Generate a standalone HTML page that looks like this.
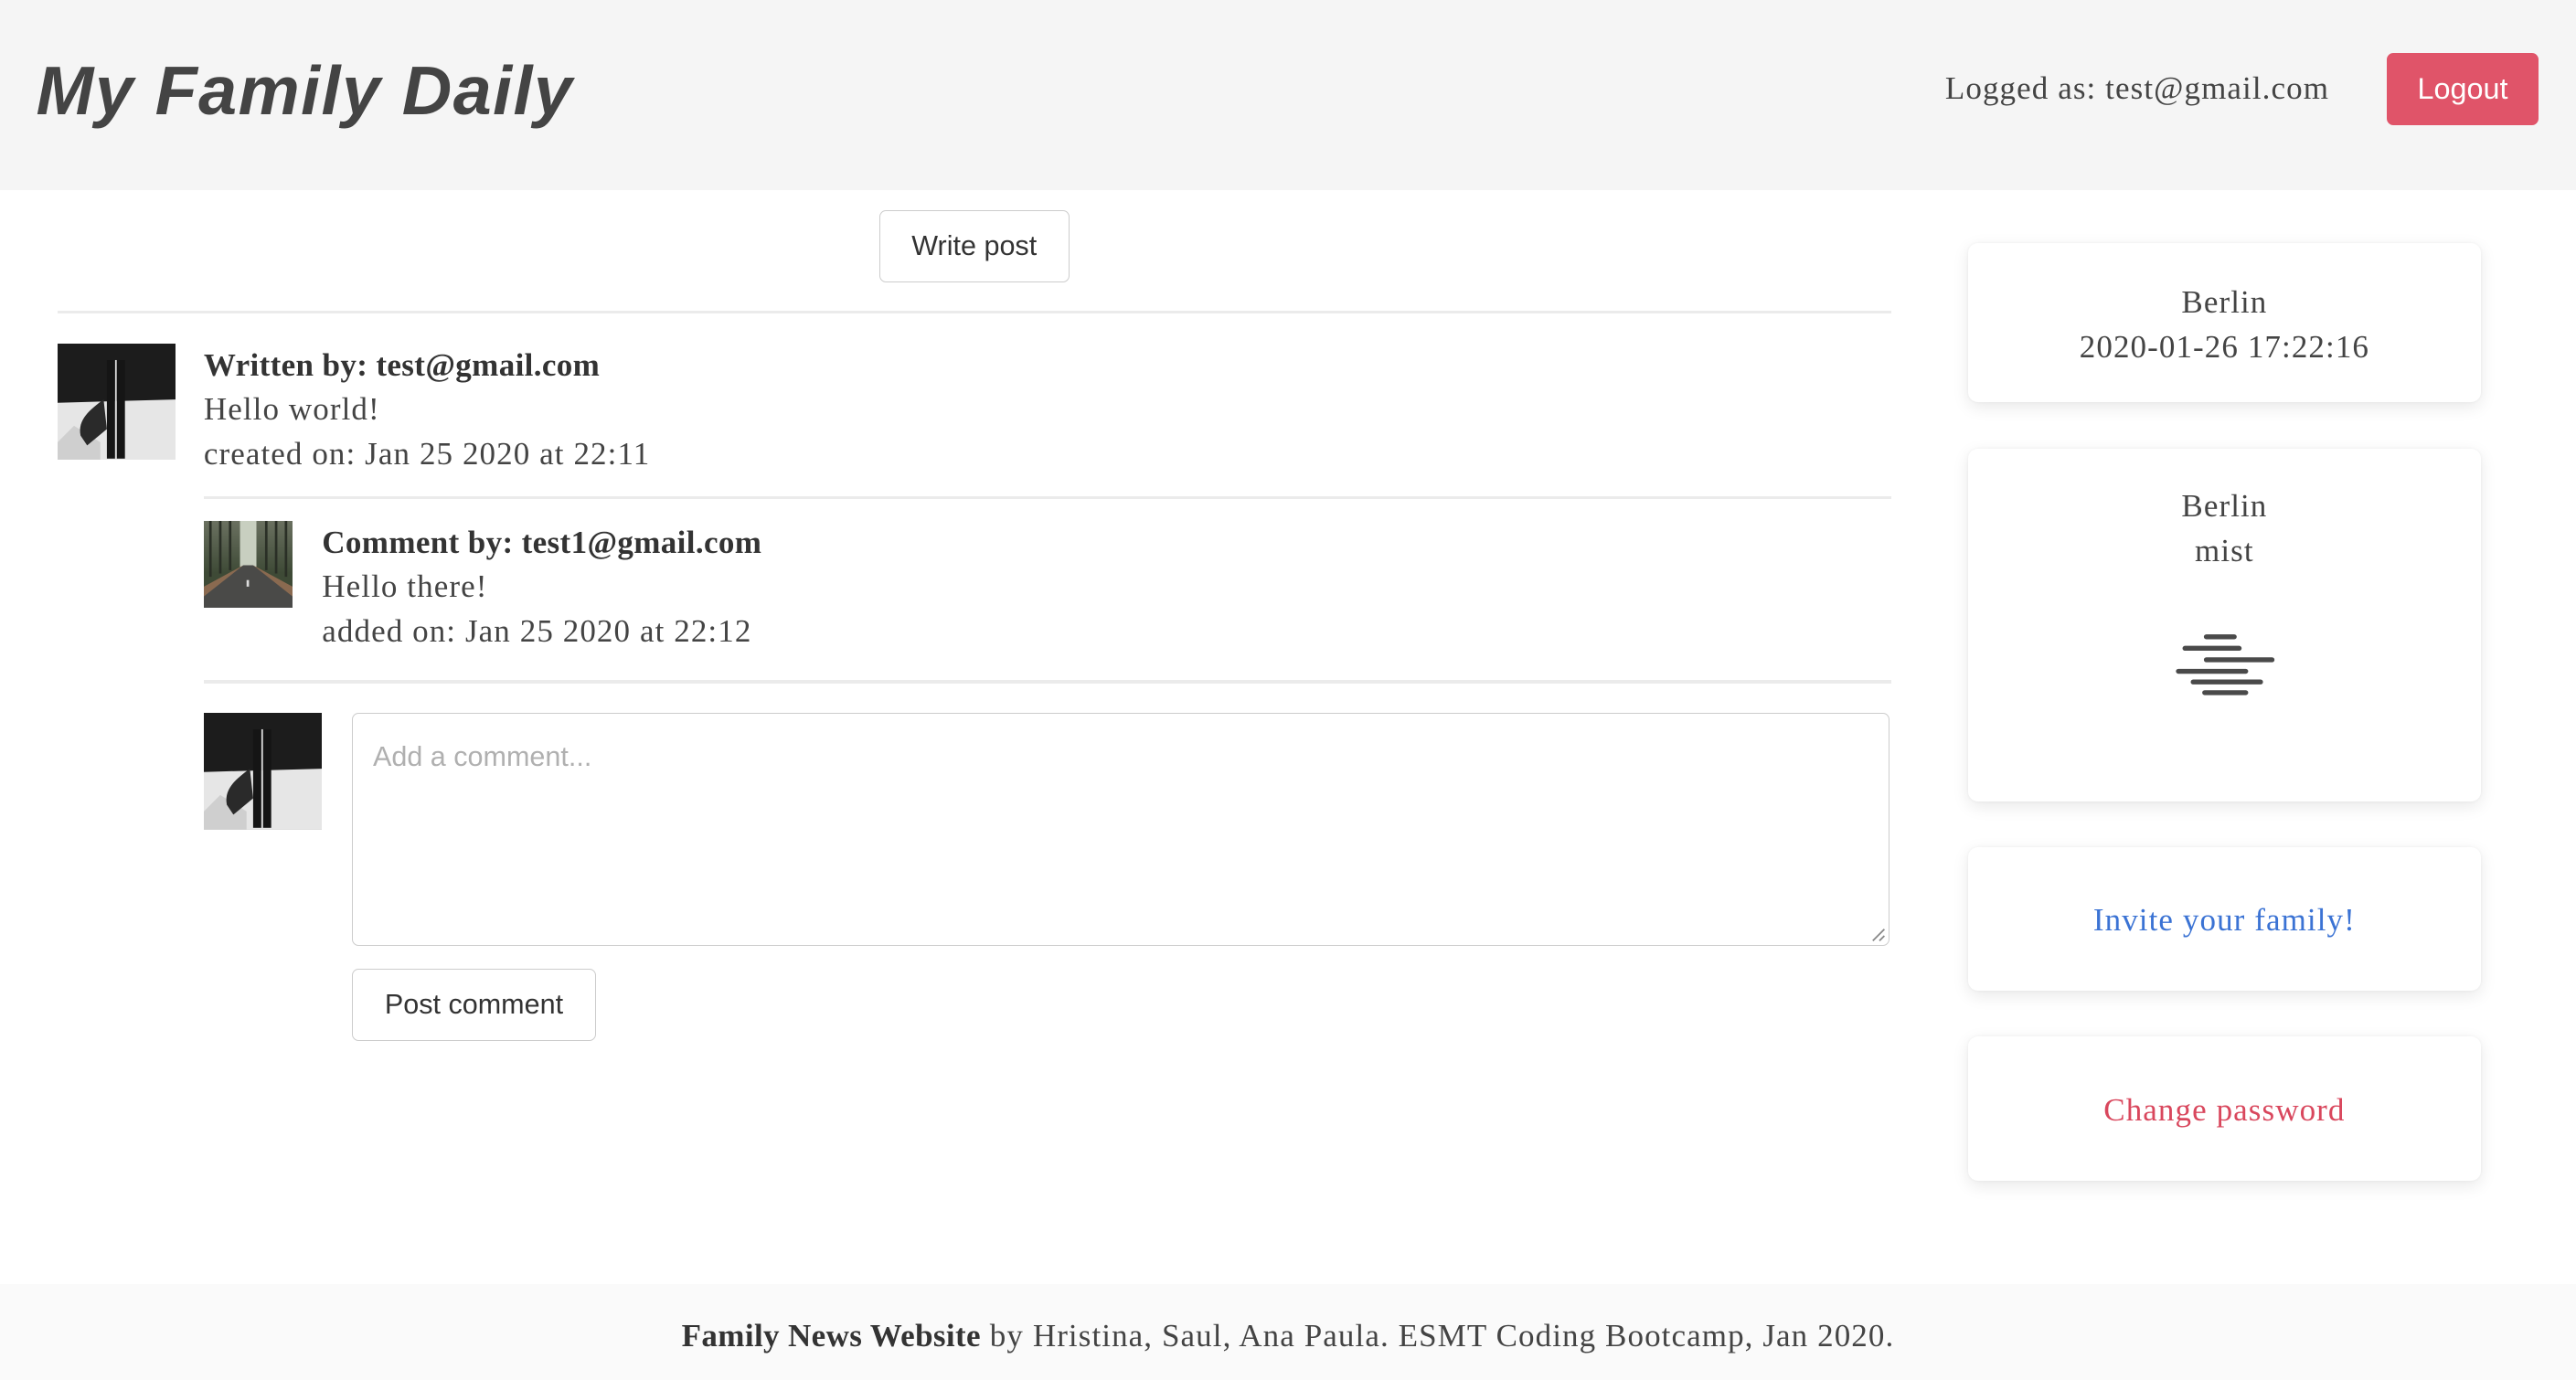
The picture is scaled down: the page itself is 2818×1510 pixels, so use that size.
<!DOCTYPE html>
<html><head><meta charset="utf-8"><style>
html,body{margin:0;padding:0;background:#fff;overflow:hidden}
#w{zoom:1.7972;width:1568px;height:840px;position:relative;font-family:"Liberation Serif",serif;color:#444;letter-spacing:0.6px}
.a{position:absolute;white-space:nowrap}
.btn{position:absolute;border:1px solid #ccc;border-radius:4px;background:#fff;font-family:"Liberation Sans",sans-serif;font-size:17px;color:#333;display:flex;align-items:center;justify-content:center;box-sizing:border-box;letter-spacing:0}
.hr{position:absolute;height:2px;background:#ebebeb}
.card{position:absolute;left:1198px;width:312px;background:#fff;border-radius:6px;box-shadow:0 3px 10px rgba(0,0,0,.09),0 0 2px rgba(0,0,0,.05);text-align:center;font-size:19.5px}
.t{font-size:19.5px;line-height:27px}
b{letter-spacing:0.2px}
</style></head><body><div id="w">
<div class="a" style="left:0;top:0;width:1568px;height:116px;background:#f5f5f5"></div>
<div class="a" style="left:22px;top:31px;font-family:'Liberation Sans',sans-serif;font-weight:bold;font-style:italic;font-size:42px;color:#444;letter-spacing:0.8px">My Family Daily</div>
<div class="a" style="left:1184px;top:43px;font-size:19.5px;color:#444">Logged as: test@gmail.com</div>
<div class="btn" style="left:1453px;top:32px;width:92px;height:44px;background:#e05469;border-color:#e05469;color:#fff;font-size:18px">Logout</div>

<div class="btn" style="left:535px;top:128px;width:116px;height:44px">Write post</div>
<div class="hr" style="left:35px;top:189px;width:1116px"></div>

<svg class="a" style="left:35px;top:209px" width="72" height="71" viewBox="0 0 72 71"><rect width="72" height="71" fill="#1c1c1c"/><polygon points="0,36 72,34 72,71 0,71" fill="#e6e6e6"/><path d="M0,60 L10,50 L26,60 L26,71 L0,71Z" fill="#cfcfcf"/><path d="M28,34 C20,40 12,46 14,56 L18,62 L30,52 Z" fill="#2a2a2a"/><rect x="30" y="10" width="5" height="60" fill="#151515"/><rect x="36" y="10" width="5" height="60" fill="#151515"/><rect x="35" y="10" width="1" height="60" fill="#ddd"/></svg>
<div class="a t" style="left:124px;top:209px"><b style="color:#333">Written by: test@gmail.com</b><br>Hello world!<br>created on: Jan 25 2020 at 22:11</div>
<div class="hr" style="left:124px;top:302px;width:1027px"></div>

<svg class="a" style="left:124px;top:317px" width="54" height="53" viewBox="0 0 54 53"><defs><linearGradient id="g" x1="0" y1="0" x2="0" y2="1"><stop offset="0" stop-color="#6a7060"/><stop offset=".6" stop-color="#3e4a36"/></linearGradient></defs><rect width="54" height="53" fill="url(#g)"/><rect x="22" y="0" width="10" height="28" fill="#c8cfc0"/><g stroke="#2a2f26" stroke-width="1.5"><line x1="4" y1="0" x2="4" y2="34"/><line x1="10" y1="0" x2="10" y2="32"/><line x1="16" y1="0" x2="16" y2="30"/><line x1="38" y1="0" x2="38" y2="30"/><line x1="44" y1="0" x2="44" y2="32"/><line x1="50" y1="0" x2="50" y2="34"/></g><polygon points="24,27 30,27 54,44 54,53 0,53 0,44" fill="#4a4a48"/><polygon points="0,40 24,27 0,46" fill="#8a6a50"/><polygon points="54,40 30,27 54,46" fill="#8a6a50"/><rect x="26" y="36" width="1.5" height="4" fill="#ddd"/></svg>
<div class="a t" style="left:196px;top:317px"><b style="color:#333">Comment by: test1@gmail.com</b><br>Hello there!<br>added on: Jan 25 2020 at 22:12</div>
<div class="hr" style="left:124px;top:414px;width:1027px"></div>

<svg class="a" style="left:124px;top:434px" width="72" height="71" viewBox="0 0 72 71"><rect width="72" height="71" fill="#1c1c1c"/><polygon points="0,36 72,34 72,71 0,71" fill="#e6e6e6"/><path d="M0,60 L10,50 L26,60 L26,71 L0,71Z" fill="#cfcfcf"/><path d="M28,34 C20,40 12,46 14,56 L18,62 L30,52 Z" fill="#2a2a2a"/><rect x="30" y="10" width="5" height="60" fill="#151515"/><rect x="36" y="10" width="5" height="60" fill="#151515"/><rect x="35" y="10" width="1" height="60" fill="#ddd"/></svg>
<div class="a" style="left:214px;top:434px;width:936px;height:142px;border:1px solid #ccc;border-radius:4px;box-sizing:border-box"></div>
<div class="a" style="left:227px;top:451px;font-family:'Liberation Sans',sans-serif;font-size:17px;color:#b0b0b0;letter-spacing:0">Add a comment...</div>
<svg class="a" style="left:1139px;top:565px" width="9" height="9"><path d="M1,8 L8,1 M5,8 L8,5" stroke="#888" stroke-width="1"/></svg>
<div class="btn" style="left:214px;top:590px;width:149px;height:44px">Post comment</div>

<div class="card" style="top:148px;height:97px"><div style="padding-top:23px;line-height:27px">Berlin<br>2020-01-26 17:22:16</div></div>
<div class="card" style="top:273px;height:215px"><div style="padding-top:22px;line-height:27px">Berlin<br>mist</div>
<svg class="a" style="left:0;top:0" width="312" height="215"><g stroke="#4a4a4a" stroke-width="3" stroke-linecap="round" transform="translate(-1198,-273)"><line x1="1343" y1="387.5" x2="1360" y2="387.5"/><line x1="1330" y1="394.5" x2="1363" y2="394.5"/><line x1="1343" y1="401.5" x2="1383" y2="401.5"/><line x1="1326" y1="408.5" x2="1367" y2="408.5"/><line x1="1335" y1="415" x2="1376" y2="415"/><line x1="1342" y1="421.5" x2="1367" y2="421.5"/></g></svg></div>
<div class="card" style="top:516px;height:87px;line-height:89px;color:#3b73d4">Invite your family!</div>
<div class="card" style="top:631px;height:88px;line-height:90px;color:#d9475d">Change password</div>

<div class="a" style="left:0;top:782px;width:1568px;height:58px;background:#fafafa;text-align:center;line-height:63px;font-size:19.5px;color:#444"><b style="color:#333">Family News Website</b> by Hristina, Saul, Ana Paula. ESMT Coding Bootcamp, Jan 2020.</div>
</div></body></html>
